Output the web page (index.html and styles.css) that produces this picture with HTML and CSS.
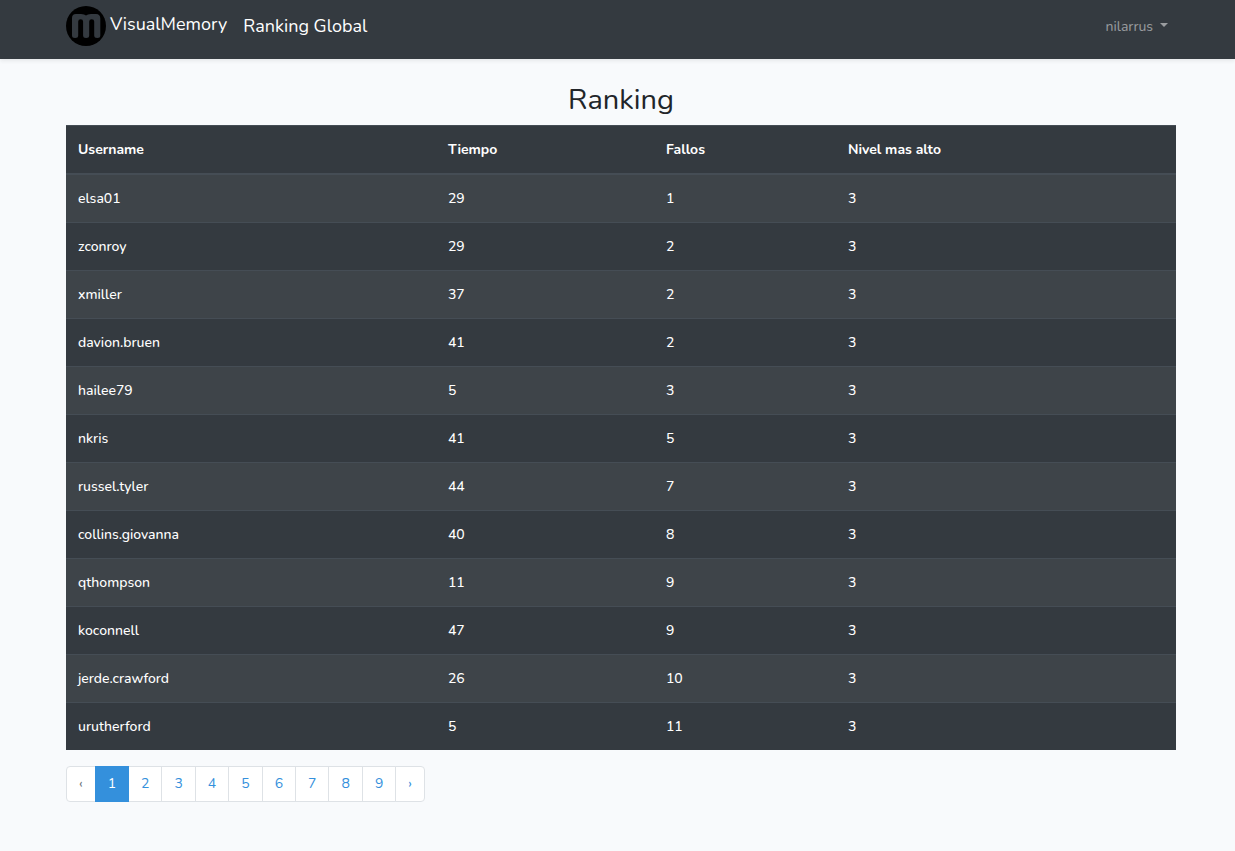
FILE: index.html
```html
<!DOCTYPE html>
<html lang="es">
<head>
<meta charset="utf-8">
<meta name="viewport" content="width=device-width, initial-scale=1">
<title>VisualMemory</title>
<link rel="stylesheet" href="styles.css">
</head>
<body>
<header class="navbar">
  <nav class="container navbar-inner">
    <a class="brand" href="#">
      <svg class="logo" viewBox="0 0 40 40" aria-hidden="true">
        <circle cx="20" cy="20" r="20" fill="#000"/>
        <path fill="#343a40" d="M6 12Q6 8 10 8H15Q18.500 8 20 9.500Q21.500 8 25 8H30Q34.300 8 34.300 12.500V29.500Q34.300 32 31.300 32Q28.200 32 28.200 29.500V15.500Q28.200 13.300 25.700 13.300Q23.200 13.300 23.200 15.500V29.500Q23.200 32 20.100 32Q17.100 32 17.100 29.500V15.500Q17.100 13.300 14.700 13.300Q12.200 13.300 12.200 15.500V29.500Q12.200 32 9.100 32Q6 32 6 29.500Z"/>
      </svg>
      <span class="brand-name">VisualMemory</span>
    </a>
    <a class="nav-link" href="#">Ranking Global</a>
    <button class="user-menu" type="button" aria-haspopup="true">nilarrus<span class="caret"></span></button>
  </nav>
</header>
<main class="container content">
  <h1 class="title">Ranking</h1>
  <table class="ranking">
    <thead>
      <tr><th class="col-user" scope="col">Username</th><th class="col-time" scope="col">Tiempo</th><th class="col-fails" scope="col">Fallos</th><th scope="col">Nivel mas alto</th></tr>
    </thead>
    <tbody>
      <tr><td>elsa01</td><td>29</td><td>1</td><td>3</td></tr>
      <tr><td>zconroy</td><td>29</td><td>2</td><td>3</td></tr>
      <tr><td>xmiller</td><td>37</td><td>2</td><td>3</td></tr>
      <tr><td>davion.bruen</td><td>41</td><td>2</td><td>3</td></tr>
      <tr><td>hailee79</td><td>5</td><td>3</td><td>3</td></tr>
      <tr><td>nkris</td><td>41</td><td>5</td><td>3</td></tr>
      <tr><td>russel.tyler</td><td>44</td><td>7</td><td>3</td></tr>
      <tr><td>collins.giovanna</td><td>40</td><td>8</td><td>3</td></tr>
      <tr><td>qthompson</td><td>11</td><td>9</td><td>3</td></tr>
      <tr><td>koconnell</td><td>47</td><td>9</td><td>3</td></tr>
      <tr><td>jerde.crawford</td><td>26</td><td>10</td><td>3</td></tr>
      <tr><td>urutherford</td><td>5</td><td>11</td><td>3</td></tr>
    </tbody>
  </table>
  <nav aria-label="Paginación">
    <ul class="pagination">
      <li><span class="page disabled">‹</span></li>
      <li><a class="page active" href="#" aria-current="page">1</a></li>
      <li><a class="page" href="#">2</a></li>
      <li><a class="page" href="#">3</a></li>
      <li><a class="page" href="#">4</a></li>
      <li><a class="page" href="#">5</a></li>
      <li><a class="page" href="#">6</a></li>
      <li><a class="page" href="#">7</a></li>
      <li><a class="page" href="#">8</a></li>
      <li><a class="page" href="#">9</a></li>
      <li><a class="page" href="#">›</a></li>
    </ul>
  </nav>
</main>
</body>
</html>
```
FILE: styles.css
```css
* { box-sizing: border-box; }

body {
  margin: 0;
  background: #f8fafc;
  color: #212529;
  font: 400 14px/23px Nunito, Lato, sans-serif;
}

a { text-decoration: none; }

.container { padding: 0 59px 0 66px; }

.navbar {
  background: #343a40;
  box-shadow: 0 2px 4px rgba(0, 0, 0, 0.075);
}

.navbar-inner {
  display: flex;
  align-items: center;
  min-height: 59px;
  padding-bottom: 7px;
}

.brand {
  display: flex;
  align-items: center;
  gap: 4px;
  margin-right: 16px;
  color: #fff;
  font-size: 18px;
  line-height: 40px;
}

.brand-name { padding-bottom: 4px; }

.logo {
  width: 40px;
  height: 40px;
}

.nav-link {
  color: #fff;
  font-size: 18px;
}

.user-menu {
  display: flex;
  align-items: center;
  gap: 7px;
  margin-left: auto;
  padding: 8px;
  border: 0;
  background: none;
  color: rgba(255, 255, 255, 0.5);
  font: inherit;
}

.caret {
  margin-bottom: 2px;
  border-top: 4px solid;
  border-right: 4px solid transparent;
  border-left: 4px solid transparent;
}

.content { padding-top: 24px; }

.title {
  margin: 0 0 8px;
  font-size: 29px;
  font-weight: 400;
  line-height: 34px;
  text-align: center;
}

.ranking {
  width: 100%;
  margin-bottom: 16px;
  border-spacing: 0;
  table-layout: fixed;
  background: #343a40;
  color: #fff;
}

.col-user { width: 33.33%; }
.col-time { width: 19.64%; }
.col-fails { width: 16.4%; }

.ranking th,
.ranking td {
  padding: 12px;
  border-top: 1px solid #454d55;
  text-align: left;
}

.ranking td { font-weight: 500; }

.ranking th {
  border-bottom: 2px solid #454d55;
  font-weight: 700;
}

.ranking tbody tr:first-child td { border-top: 0; }

.ranking tbody tr:nth-child(odd) { background: rgba(255, 255, 255, 0.05); }

.pagination {
  display: flex;
  margin: 0;
  padding: 0 0 0 1px;
  list-style: none;
}

.page {
  display: block;
  margin-left: -1px;
  padding: 8px 12px;
  border: 1px solid #dee2e6;
  background: #fff;
  color: #3490dc;
  line-height: 18px;
}

.pagination li:first-child .page { border-radius: 4px 0 0 4px; }
.pagination li:last-child .page { border-radius: 0 4px 4px 0; }

.page.disabled { color: #6c757d; }

.page.active {
  position: relative;
  border-color: #3490dc;
  background: #3490dc;
  color: #fff;
}
```
